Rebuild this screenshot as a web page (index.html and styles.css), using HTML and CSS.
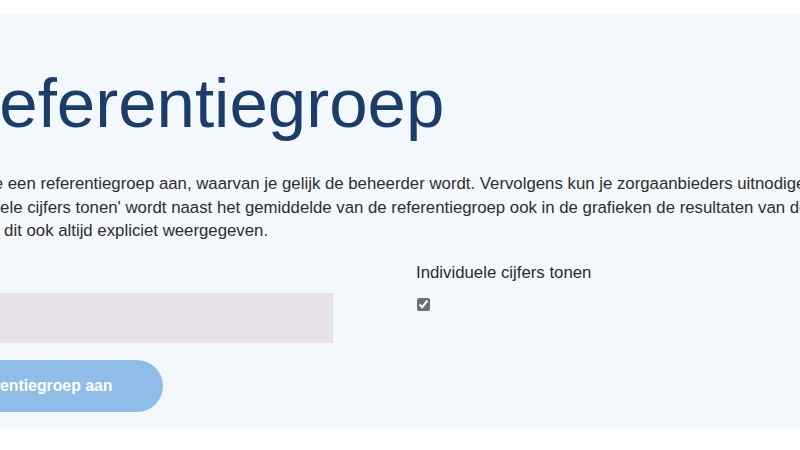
FILE: index.html
```html
<!DOCTYPE html>
<html lang="nl">
<head>
<meta charset="utf-8">
<title>Nieuwe referentiegroep</title>
<link rel="stylesheet" href="styles.css">
</head>
<body>
<main class="panel">
  <h1 class="title">Nieuwe referentiegroep</h1>
  <p class="intro">Met behulp van het formulier maak je een referentiegroep aan, waarvan je gelijk de beheerder wordt. Vervolgens kun je zorgaanbieders uitnodigen om deel te nemen.<br>Wanneer jij het vinkje zet bij 'Individuele cijfers tonen' wordt naast het gemiddelde van de referentiegroep ook in de grafieken de resultaten van de individuele<br>leden getoond. In de grafieken wordt dit ook altijd expliciet weergegeven.</p>
  <form class="form">
    <div class="form-row">
      <div class="field">
        <label class="field-label" for="naam">Naam</label>
        <input class="text-input" id="naam" type="text">
      </div>
      <div class="field">
        <label class="field-label" for="individueel">Individuele cijfers tonen</label>
        <input class="check" id="individueel" type="checkbox" checked>
      </div>
    </div>
    <button class="btn" type="button">Maak referentiegroep aan</button>
  </form>
</main>
</body>
</html>
```
FILE: styles.css
```css
html, body {
  margin: 0;
  background: #ffffff;
}
body {
  padding-top: 14px;
  overflow: hidden;
  font-family: "Liberation Sans", Arial, sans-serif;
  color: #2b2b2b;
}
.panel {
  display: block;
  margin-left: -303px;
  padding: 48px 0 16px 30px;
  background: #f3f8fc;
}
.title {
  margin: 0 0 27px;
  font-size: 69px;
  line-height: 83px;
  font-weight: normal;
  color: #1c3c69;
  white-space: nowrap;
}
.intro {
  margin: 0;
  font-size: 16.8px;
  line-height: 23.5px;
  white-space: nowrap;
  color: #2e2e2e;
}
.form {
  margin: 18px 0 0;
}
.form-row {
  display: grid;
  grid-template-columns: 606px 1fr;
  column-gap: 83px;
}
.field {
  display: flex;
  flex-direction: column;
  align-items: flex-start;
}
.field-label {
  font-size: 16.8px;
  line-height: 23.5px;
  color: #2b2b2b;
}
.text-input {
  box-sizing: border-box;
  width: 100%;
  height: 50px;
  margin-top: 9px;
  border: none;
  border-radius: 0;
  background: #e8e3e8;
  font: inherit;
}
.check {
  width: 13px;
  height: 13px;
  margin: 14px 0 0 1px;
  accent-color: #6f6f6f;
}
.btn {
  display: block;
  height: 52px;
  margin-top: 17px;
  padding: 0 51px 0 194px;
  border: none;
  border-radius: 26px;
  background: #8fbde7;
  color: #ffffff;
  font-family: "Liberation Sans", Arial, sans-serif;
  font-size: 15.8px;
  font-weight: bold;
  white-space: nowrap;
}
```
